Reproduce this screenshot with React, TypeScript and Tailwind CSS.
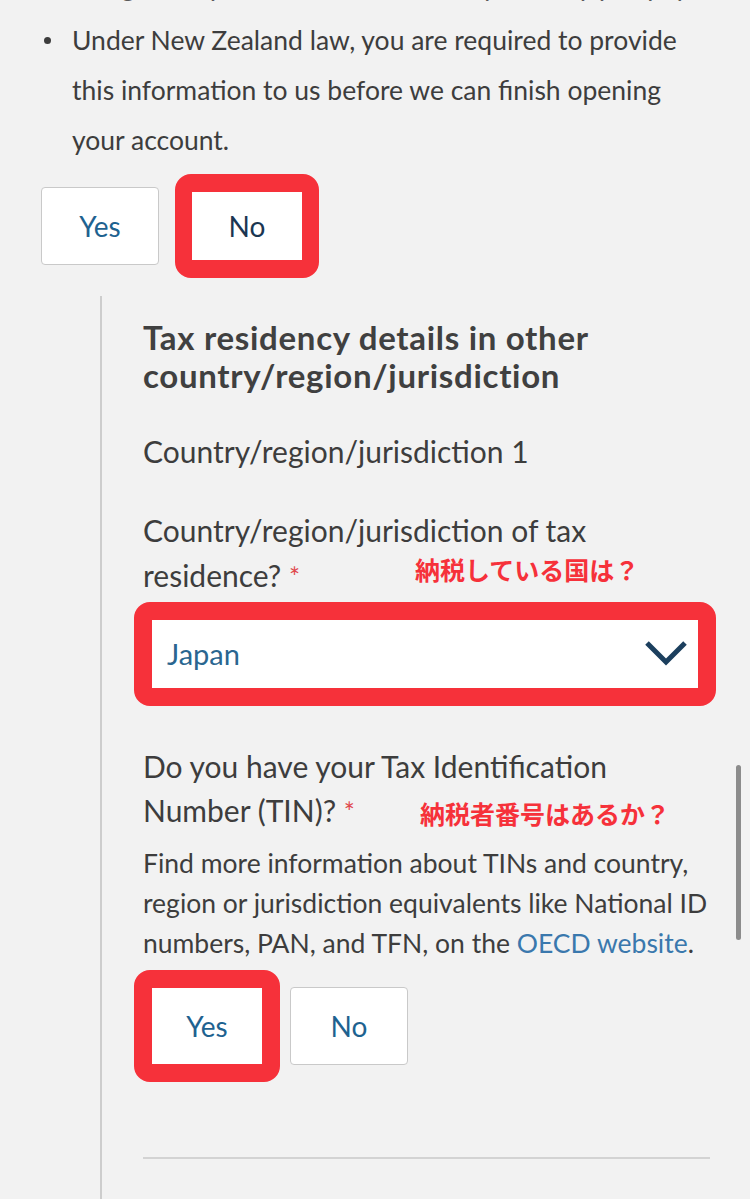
const Highlight = ({ children, className = "" }: { children: React.ReactNode; className?: string }) => (
  <div className={`rounded-[16px] border-[18px] border-[#f6313a] bg-white ${className}`}>{children}</div>
);

const Note = ({ children, className = "" }: { children: React.ReactNode; className?: string }) => (
  <span
    className={`absolute whitespace-nowrap text-[25px] font-bold leading-none text-[#f6313a] font-['Noto_Sans_CJK_JP',sans-serif] ${className}`}
  >
    {children}
  </span>
);

const App = () => {
  return (
    <div className="relative h-[1199px] overflow-hidden bg-[#f2f2f2] font-['Lato',sans-serif] text-[#3d3d3d]">
      <ul className="-mt-[35px] pl-[72px] pr-[50px] text-[26.5px] leading-[50px]">
        <li className="relative -top-[4px] overflow-hidden whitespace-nowrap text-[#5a5a5a]">
          and give us your tax details for every country you pay tax in.
        </li>
        <li className="relative">
          <span className="absolute -left-[28px] top-[22px] h-[7px] w-[7px] rounded-full bg-[#3d3d3d]" />
          Under New Zealand law, you are required to provide this information to us before we can finish opening
          your account.
        </li>
      </ul>

      <div className="mt-[9px] flex items-center pl-[41px]">
        <button className="h-[78px] w-[118px] rounded-[4px] border border-[#c9c9c9] bg-white text-[28px] text-[#1e6290]">
          Yes
        </button>
        <Highlight className="ml-[16px] border-x-[17px]">
          <div className="flex h-[68px] w-[110px] items-center justify-center text-[28px] text-[#1b3652]">No</div>
        </Highlight>
      </div>

      <div className="ml-[100px] mt-[18px] border-l-2 border-[#cdcdcd] pb-[200px] pl-[41px] pt-[22px]">
        <div className="w-[567px]">
          <h2 className="text-[33px] font-bold leading-[38px] tracking-[0.7px] text-[#404040]">
            Tax residency details in other country/region/jurisdiction
          </h2>

          <p className="mt-[35px] text-[30px] leading-[44px]">Country/region/jurisdiction 1</p>

          <p className="relative mt-[35px] text-[30px] leading-[45px]">
            Country/region/jurisdiction of tax residence? <span className="text-[26px] text-[#e0474c]">*</span>
            <Note className="left-[272px] top-[49px]">納税している国は？</Note>
          </p>

          <Highlight className="-ml-[9px] mt-[2px] w-[582px]">
            <div className="flex h-[68px] items-center justify-between pl-[15px] pr-[10px]">
              <span className="text-[29px] text-[#2a6690]">Japan</span>
              <svg className="-mt-[3px]" width="44" height="26" viewBox="0 0 44 26" fill="none">
                <path d="M3 3 L22 22 L41 3" stroke="#1c3f5e" strokeWidth="5" strokeLinejoin="miter" />
              </svg>
            </div>
          </Highlight>

          <p className="relative mt-[38px] text-[30px] leading-[44px]">
            Do you have your Tax Identification Number (TIN)? <span className="text-[26px] text-[#e0474c]">*</span>
            <Note className="left-[277px] top-[57px]">納税者番号はあるか？</Note>
          </p>

          <p className="mt-[9px] w-[580px] text-[26.5px] leading-[40px]">
            Find more information about TINs and country, region or jurisdiction equivalents like National ID
            numbers, PAN, and TFN, on the <a className="text-[#3a78ad]">OECD website</a>.
          </p>

          <div className="-ml-[9px] mt-[7px] flex items-center">
            <Highlight>
              <div className="flex h-[76px] w-[110px] items-center justify-center text-[28px] text-[#1e6290]">Yes</div>
            </Highlight>
            <button className="ml-[10px] h-[78px] w-[118px] rounded-[4px] border border-[#c9c9c9] bg-white text-[28px] text-[#1e6290]">
              No
            </button>
          </div>

          <div className="mt-[75px] h-[2px] bg-[#d3d3d3]" />
        </div>
      </div>

      <div className="absolute right-[9px] top-[765px] h-[175px] w-[5px] rounded-full bg-[#8c8c8c]" />
    </div>
  );
};

export default App;
